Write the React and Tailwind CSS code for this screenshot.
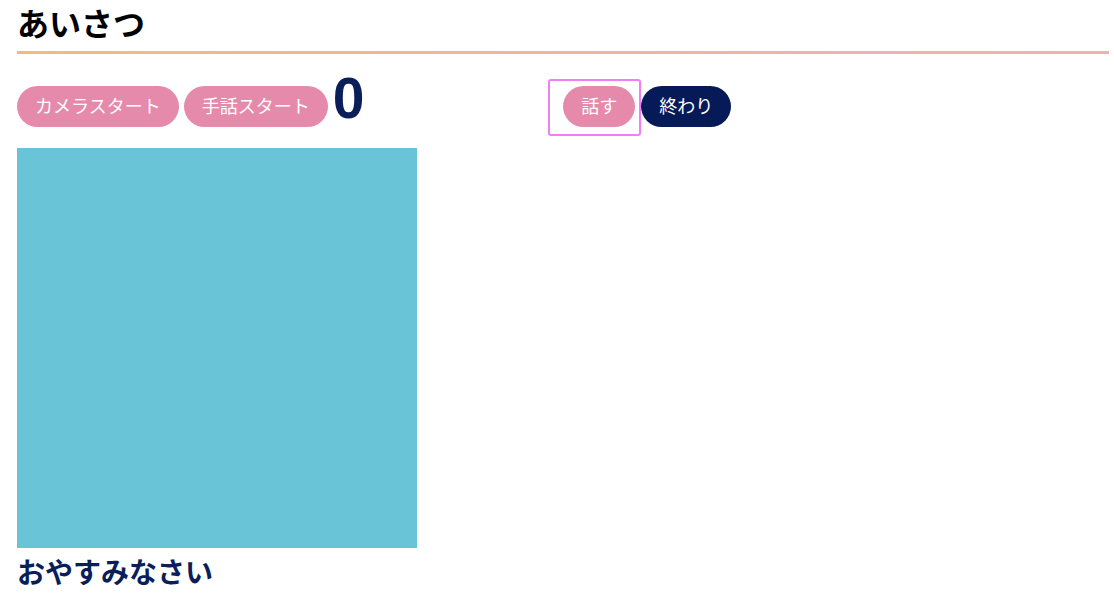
export default function App() {
  const font = { fontFamily: '"Liberation Sans", "Noto Sans CJK JP", sans-serif' };
  return (
    <div className="w-[1114px] h-[595px] bg-white overflow-hidden pl-[17px] pr-[5px]" style={font}>
      <h1 className="pt-[9px] text-[32px] leading-none font-bold text-black">あいさつ</h1>
      <div className="mt-[10px] h-[3px] bg-gradient-to-r from-[#f4b882] to-[#efb0b4]" />
      <div className="mt-[14px] flex items-start">
        <button className="mt-[18px] h-[41px] px-[18px] rounded-full bg-[#e68aab] text-white text-[18px] leading-none">
          カメラスタート
        </button>
        <button className="ml-[5px] mt-[18px] h-[41px] px-[18px] rounded-full bg-[#e68aab] text-white text-[18px] leading-none">
          手話スタート
        </button>
        <div className="ml-[5px] mt-[2px] text-[57px] leading-[56px] font-bold text-[#0a1e5a]">0</div>
        <div className="ml-[184px] mt-[11px] border-2 border-[#f07ef5] rounded-[3px] pl-[13px] pr-[4px] pt-[5px] pb-[7px]">
          <button className="h-[41px] px-[18px] rounded-full bg-[#e68aab] text-white text-[18px] leading-none">
            話す
          </button>
        </div>
        <button className="mt-[18px] h-[41px] px-[18px] rounded-full bg-[#061a57] text-white text-[18px] leading-none">
          終わり
        </button>
      </div>
      <div className="mt-[12px] w-[400px] h-[400px] bg-[#68c4d6]" />
      <div className="mt-[12px] text-[28px] leading-none font-bold text-[#0a1e5a]">おやすみなさい</div>
    </div>
  );
}
